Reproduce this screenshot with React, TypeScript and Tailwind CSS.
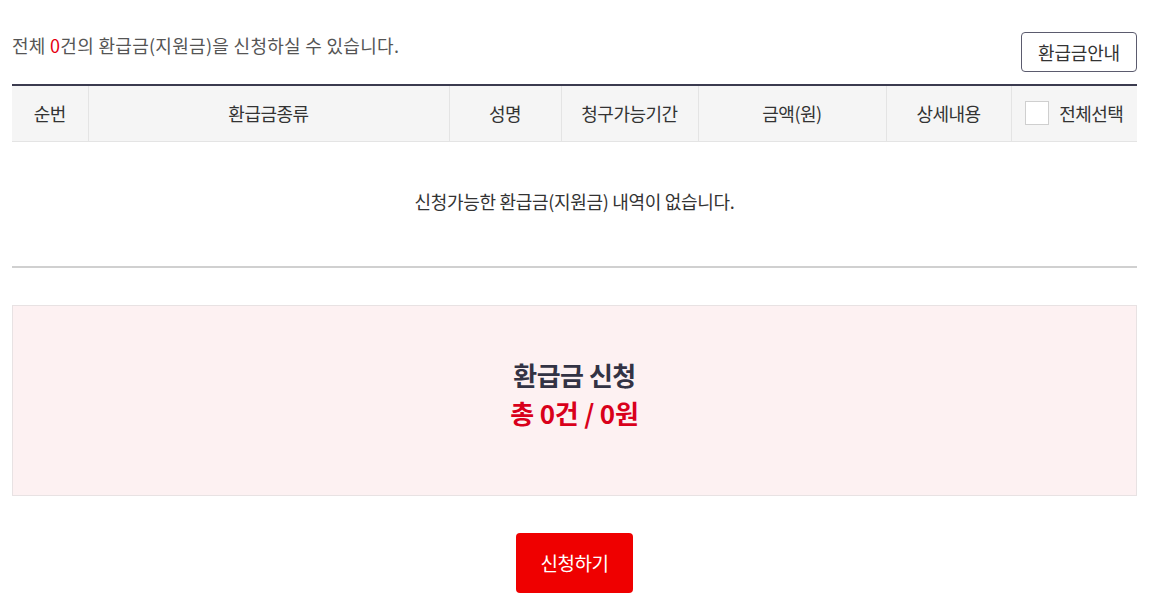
import React, { useState } from 'react';

const font = { fontFamily: '"Noto Sans CJK KR", "Noto Sans", sans-serif' };

function App() {
  const [allChecked, setAllChecked] = useState(false);

  return (
    <div className="min-h-screen bg-white text-[#333] pl-3 pr-[17px] pt-[30px]" style={font}>
      <div className="flex items-end justify-between">
        <p className="text-[18px] leading-[30px] text-[#555] tracking-[0.3px] pb-[24px]">
          전체 <span className="text-[#e60012]">0</span>건의 환급금(지원금)을 신청하실 수 있습니다.
        </p>
        <button className="h-10 w-[116px] mb-[12px] border border-[#5b5b6e] rounded-[4px] text-[18px] text-[#333] tracking-[-0.2px]">
          환급금안내
        </button>
      </div>

      <table className="w-full border-collapse border-t-2 border-[#3b3b4f] text-[18px] tracking-[-0.5px]">
        <thead>
          <tr className="h-[56px] bg-[#f5f5f5] border-b border-[#e4e4e4] font-normal">
            <th className="w-[76px] font-normal border-r border-[#e4e4e4]">순번</th>
            <th className="w-[361px] font-normal border-r border-[#e4e4e4]">환급금종류</th>
            <th className="w-[112px] font-normal border-r border-[#e4e4e4]">성명</th>
            <th className="w-[137px] font-normal border-r border-[#e4e4e4]">청구가능기간</th>
            <th className="w-[188px] font-normal border-r border-[#e4e4e4]">금액(원)</th>
            <th className="w-[125px] font-normal border-r border-[#e4e4e4]">상세내용</th>
            <th className="font-normal">
              <label className="flex items-center justify-center gap-[10px]">
                <input
                  type="checkbox"
                  checked={allChecked}
                  onChange={(e) => setAllChecked(e.target.checked)}
                  className="appearance-none w-6 h-6 border border-[#cfcfcf] bg-white checked:bg-[#e60012]"
                />
                <span>전체선택</span>
              </label>
            </th>
          </tr>
        </thead>
        <tbody>
          <tr className="h-[126px] border-b-2 border-[#d0d0d0]">
            <td colSpan={7} className="text-center text-[18px] tracking-[-0.3px] text-[#333] pb-[5px]">
              신청가능한 환급금(지원금) 내역이 없습니다.
            </td>
          </tr>
        </tbody>
      </table>

      <div className="mt-[37px] h-[191px] bg-[#fdf1f2] border border-[#e8e2e3] flex flex-col items-center justify-center pb-[14px]">
        <h2 className="text-[26px] font-bold text-[#333344] leading-[38px] tracking-[-0.5px]">환급금 신청</h2>
        <p className="text-[26px] font-bold text-[#d9001b] leading-[38px] tracking-[-0.2px]">총 0건 / 0원</p>
      </div>

      <div className="flex justify-center mt-[37px] pb-[19px]">
        <button className="w-[117px] h-[60px] bg-[#ef0000] text-white text-[19px] rounded-[4px] tracking-[-0.5px]">
          신청하기
        </button>
      </div>
    </div>
  );
}

export default App;
